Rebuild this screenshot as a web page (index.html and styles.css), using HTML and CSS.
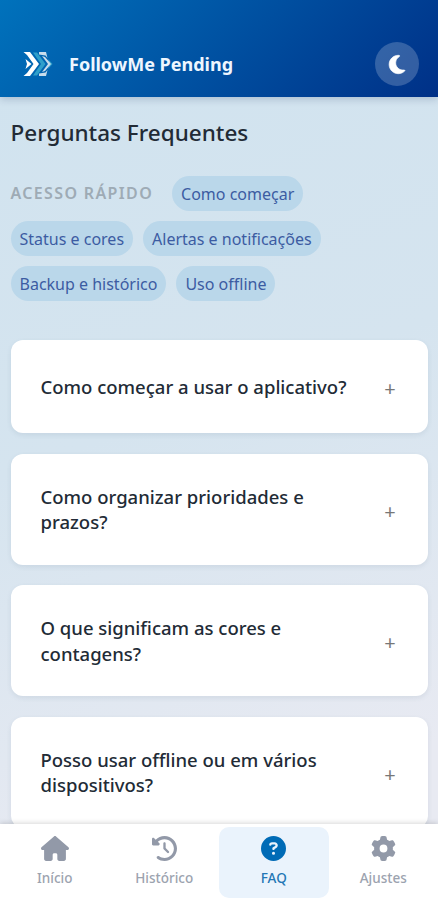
FILE: index.html
```html
<!DOCTYPE html>
<html lang="pt-BR">
<head>
<meta charset="utf-8">
<meta name="viewport" content="width=device-width, initial-scale=1">
<title>FollowMe Pending</title>
<link rel="stylesheet" href="styles.css">
</head>
<body>
<div class="app">
  <header class="header">
    <svg class="logo" viewBox="0 0 30 26" aria-hidden="true">
      <path class="logo-teal" d="M10 1.500h4l8.500 11.500-8.500 11.500h-4L18 13zM25 8l4.500 5-4.500 5 1.500-5z"/>
      <path class="logo-white" d="M.5 1h6.500l9 12-9 12H.5L4 22l6.500-9L4 4zM2.500 8l6 5-6 5 1.500-5z"/>
      <path class="logo-light" d="M16 1h7l1.500 6-2-2.500L16 3.500zM16 25h7l1.500-6-2 2.500L16 22.500zM19 5l3 1 6 7-6 7-3 1 6-8z"/>
    </svg>
    <span class="brand">FollowMe Pending</span>
    <button class="theme" aria-label="Tema">
      <svg viewBox="0 0 384 512"><path d="M223.500 32C100 32 0 132.300 0 256S100 480 223.500 480c60.600 0 115.500-24.200 155.800-63.400c5-4.900 6.300-12.500 3.100-18.700s-10.100-9.700-17-8.500c-9.800 1.700-19.800 2.600-30.100 2.600c-96.900 0-175.500-78.800-175.500-176c0-65.800 36-123.100 89.300-153.300c6.100-3.500 9.200-10.500 7.700-17.300s-7.300-11.900-14.300-12.500c-6.300-.5-12.600-.8-19-.8z"/></svg>
    </button>
  </header>
  <main class="main">
    <h1 class="title">Perguntas Frequentes</h1>
    <div class="quick">
      <span class="quick-label">ACESSO RÁPIDO</span>
      <a class="chip">Como começar</a>
      <a class="chip">Status e cores</a>
      <a class="chip">Alertas e notificações</a>
      <a class="chip">Backup e histórico</a>
      <a class="chip">Uso offline</a>
    </div>
    <section class="faq">
      <article class="card"><h2 class="question">Como começar a usar o aplicativo?</h2><span class="plus">+</span></article>
      <article class="card"><h2 class="question">Como organizar prioridades e prazos?</h2><span class="plus">+</span></article>
      <article class="card"><h2 class="question">O que significam as cores e contagens?</h2><span class="plus">+</span></article>
      <article class="card"><h2 class="question">Posso usar offline ou em vários dispositivos?</h2><span class="plus">+</span></article>
    </section>
  </main>
  <nav class="nav">
    <a class="tab">
      <svg class="home" viewBox="0 0 576 512"><path d="M575.800 255.500c0 18-15 32.100-32 32.100h-32l.7 160.200c0 2.700-.2 5.400-.5 8.100V472c0 22.100-17.900 40-40 40H376c-22.100 0-40-17.900-40-40V384c0-17.700-14.300-32-32-32H272c-17.700 0-32 14.300-32 32v88c0 22.100-17.900 40-40 40H104c-22.100 0-40-17.900-40-40V287.600H32c-18 0-32-14-32-32.100c0-9 3-17 10-24L266.400 8c7-7 15-8 22-8s15 2 21 7L564.800 231.500c8 7 12 15 11 24z"/></svg>
      <span>Início</span>
    </a>
    <a class="tab">
      <svg viewBox="0 0 512 512"><path d="M75 75L41 41C25.900 25.900 0 36.600 0 57.900V168c0 13.300 10.700 24 24 24H134.100c21.400 0 32.100-25.900 17-41l-30.800-30.800C155 85.500 203 64 256 64c106 0 192 86 192 192s-86 192-192 192c-40.800 0-78.600-12.700-109.700-34.400c-14.500-10.100-34.400-6.600-44.600 7.900s-6.600 34.400 7.900 44.600C151.200 495 201.700 512 256 512c141.400 0 256-114.600 256-256S397.400 0 256 0C185.300 0 121.300 28.700 75 75zm181 53c-13.300 0-24 10.700-24 24V256c0 6.400 2.500 12.500 7 17l72 72c9.400 9.400 24.600 9.400 33.900 0s9.400-24.600 0-33.900l-65-65V152c0-13.300-10.700-24-24-24z"/></svg>
      <span>Histórico</span>
    </a>
    <a class="tab active">
      <svg viewBox="0 0 512 512"><path d="M256 512A256 256 0 1 0 256 0a256 256 0 1 0 0 512zM169.800 165.300c7.900-22.300 29.100-37.300 52.800-37.300h58.300c34.900 0 63.100 28.300 63.100 63.100c0 22.600-12.100 43.500-31.700 54.800L280 264.400c-.2 13-10.900 23.600-24 23.600c-13.300 0-24-10.700-24-24V250.500c0-8.600 4.600-16.500 12.100-20.800l44.300-25.400c4.700-2.700 7.600-7.700 7.600-13.100c0-8.400-6.800-15.100-15.100-15.100H222.600c-3.400 0-6.400 2.100-7.500 5.300l-.4 1.200c-4.400 12.500-18.200 19-30.600 14.600s-19-18.200-14.600-30.600l.4-1.200zM224 352a32 32 0 1 1 64 0 32 32 0 1 1-64 0z"/></svg>
      <span>FAQ</span>
    </a>
    <a class="tab">
      <svg viewBox="0 0 512 512"><path d="M495.900 166.600c3.200 8.700 .5 18.400-6.400 24.600l-43.300 39.400c1.100 8.300 1.700 16.800 1.700 25.400s-.6 17.100-1.700 25.400l43.300 39.400c6.900 6.200 9.600 15.900 6.400 24.600c-4.400 11.900-9.700 23.300-15.800 34.300l-4.700 8.100c-6.600 11-14 21.400-22.100 31.200c-5.900 7.200-15.700 9.600-24.500 6.800l-55.700-17.700c-13.400 10.300-28.200 18.900-44 25.400l-12.500 57.100c-2 9.100-9 16.300-18.200 17.800c-13.800 2.300-28 3.500-42.500 3.500s-28.700-1.200-42.500-3.500c-9.200-1.500-16.200-8.700-18.200-17.800l-12.500-57.100c-15.800-6.500-30.600-15.100-44-25.400L83.100 425.900c-8.800 2.800-18.600 .3-24.500-6.800c-8.100-9.800-15.500-20.200-22.100-31.200l-4.700-8.100c-6.100-11-11.400-22.400-15.800-34.300c-3.200-8.700-.5-18.400 6.400-24.600l43.300-39.400C64.600 273.100 64 264.600 64 256s.6-17.100 1.700-25.400L22.400 191.200c-6.900-6.200-9.600-15.900-6.400-24.600c4.400-11.900 9.700-23.300 15.800-34.300l4.700-8.100c6.600-11 14-21.400 22.100-31.200c5.900-7.200 15.700-9.600 24.500-6.800l55.700 17.700c13.400-10.300 28.200-18.900 44-25.400l12.500-57.100c2-9.100 9-16.300 18.200-17.800C227.300 1.200 241.500 0 256 0s28.700 1.200 42.500 3.500c9.200 1.500 16.200 8.700 18.200 17.800l12.500 57.100c15.800 6.500 30.600 15.100 44 25.400l55.700-17.700c8.800-2.800 18.600-.3 24.500 6.800c8.100 9.800 15.500 20.200 22.100 31.200l4.700 8.100c6.100 11 11.400 22.400 15.800 34.300zM256 336a80 80 0 1 0 0-160 80 80 0 1 0 0 160z"/></svg>
      <span>Ajustes</span>
    </a>
  </nav>
</div>
</body>
</html>
```
FILE: styles.css
```css
* { box-sizing: border-box; }
body { margin: 0; font-family: "Noto Sans", "Open Sans", sans-serif; color: #222b36; }
.app { height: 900px; display: flex; flex-direction: column; overflow: hidden; background: linear-gradient(160deg, #d0e3ef 0%, #d5e4ef 45%, #e8eaf2 85%, #e8eaf2 100%); }
.header { flex: none; height: 97px; padding: 31px 19px 0 23px; display: flex; align-items: center; background: linear-gradient(135deg, #0072bc 0%, #003087 100%); box-shadow: 0 2px 8px rgba(0, 30, 80, .2); }
.logo { width: 30px; height: 26px; }
.logo-white { fill: #fff; }
.logo-light { fill: #c7dcec; }
.logo-teal { fill: #2f9fca; }
.brand { margin-left: 16px; padding-bottom: 1px; font-size: 18px; font-weight: 700; color: #eef6ff; white-space: nowrap; }
.theme { margin-left: auto; width: 44px; height: 44px; padding: 0; border: 0; border-radius: 50%; background: rgba(255, 255, 255, .2); display: grid; place-items: center; }
.theme svg { width: 16px; height: 21px; overflow: visible; fill: #fff; stroke: #fff; stroke-width: 16; }
.main { flex: 1; min-height: 0; overflow: hidden; padding: 20px 10px 0 10.500px; }
.title { margin: 0; font-size: 22.500px; line-height: 32px; font-weight: 500; white-space: nowrap; }
.quick { margin-top: 27px; display: flex; flex-wrap: wrap; gap: 10px; align-items: center; }
.quick-label { margin-right: 9px; padding-bottom: 2px; font-size: 16px; font-weight: 600; color: #9eabb5; letter-spacing: 1.350px; }
.chip { height: 35px; padding: 1px 9px 0; border-radius: 18px; background: #bad7ea; color: #3c5ca2; font-size: 16px; line-height: 35px; white-space: nowrap; }
.faq { margin-top: 39px; display: flex; flex-direction: column; gap: 20.500px; }
.card { flex: none; min-height: 93px; padding: 30px; display: flex; align-items: center; justify-content: space-between; border-radius: 12px; background: #fff; box-shadow: 0 2px 5px rgba(60, 90, 120, .1); }
.question { margin: 0; width: 312px; font-size: 18.500px; line-height: 25.500px; font-weight: 500; }
.plus { width: 16px; padding-top: 5px; text-align: center; font-size: 20px; line-height: 20px; color: #777; }
.nav { flex: none; height: 76px; padding-top: 3px; display: grid; grid-template-columns: repeat(4, 1fr); background: #fff; box-shadow: 0 -1px 5px rgba(0, 0, 0, .16); }
.tab { height: 71px; padding-top: 9px; display: flex; flex-direction: column; align-items: center; gap: 7px; border-radius: 10px; color: #9ca3af; font-size: 13.500px; line-height: 20px; font-weight: 500; }
.tab svg { width: 25px; height: 25px; fill: #9299a8; }
.tab .home { width: 28px; }
.active { background: #eaf3fc; color: #2377b5; }
.active svg { fill: #006bb6; }
```
